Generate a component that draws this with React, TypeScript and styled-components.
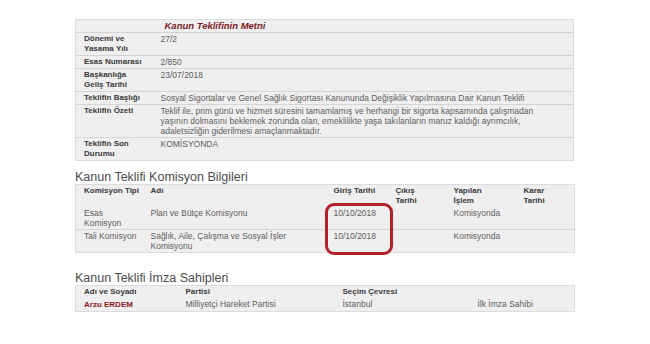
import React from "react";
import styled, { createGlobalStyle } from "styled-components";

const GlobalStyle = createGlobalStyle`
    *, *::before, *::after {
        box-sizing: border-box;
    }
    body {
        margin: 0;
        background: #fff;
        font-family: "Liberation Sans", Arial, sans-serif;
    }
`;

const Page = styled.div`
    width: 650px;
    height: 344px;
    padding: 19px 0 0 75px;
`;

const Content = styled.div`
    width: 499px;
    display: flex;
    flex-direction: column;
`;

const Table = styled.table`
    width: 499px;
    border-collapse: collapse;
    table-layout: fixed;
    background: #efefef;
    border: 1px solid #dcdcdc;
    font-size: 8.5px;
    line-height: 10px;
`;

const Row = styled.tr`
    border-bottom: 1px solid #d4d4d4;
    &:last-child {
        border-bottom: none;
    }
`;

const Cell = styled.td<{ $w?: number; $pr?: number }>`
    width: ${(p) => (p.$w ? `${p.$w}px` : "auto")};
    padding: 1px ${(p) => p.$pr ?? 3}px 1px 8px;
    vertical-align: top;
    color: #5e5e5e;
    text-align: left;
`;

const Label = styled(Cell)`
    font-size: 8px;
    font-weight: bold;
    color: #3a3a3a;
`;

const Head = styled.th<{ $w?: number }>`
    width: ${(p) => (p.$w ? `${p.$w}px` : "auto")};
    padding: 1px 3px 1px 8px;
    vertical-align: top;
    text-align: left;
    white-space: pre-line;
    font-size: 8px;
    font-weight: bold;
    color: #3a3a3a;
`;

const DocTitle = styled.span`
    font-size: 9.5px;
    font-style: italic;
    font-weight: bold;
    color: #7a1c24;
    padding-left: 4px;
`;

const SectionTitle = styled.h2<{ $top: number }>`
    margin: ${(p) => p.$top}px 0 0;
    font-size: 12.5px;
    line-height: 13px;
    font-weight: normal;
    color: #4c4c4c;
`;

const Framed = styled.div`
    position: relative;
`;

const Highlight = styled.div`
    position: absolute;
    left: 250px;
    top: 19px;
    width: 68px;
    height: 52px;
    border: 3px solid #b3202e;
    border-radius: 9px;
`;

const Name = styled.span`
    font-size: 8px;
    font-weight: bold;
    color: #8a1a22;
`;

const details: [string, React.ReactNode][] = [
    ["Dönemi ve Yasama Yılı", "27/2"],
    ["Esas Numarası", "2/850"],
    ["Başkanlığa Geliş Tarihi", "23/07/2018"],
    [
        "Teklifin Başlığı",
        "Sosyal Sigortalar ve Genel Sağlık Sigortası Kanununda Değişiklik Yapılmasına Dair Kanun Teklifi",
    ],
    [
        "Teklifin Özeti",
        "Teklif ile, prim günü ve hizmet süresini tamamlamış ve herhangi bir sigorta kapsamında çalışmadan yaşının dolmasını beklemek zorunda olan, emeklilikte yaşa takılanların maruz kaldığı ayrımcılık, adaletsizliğin giderilmesi amaçlanmaktadır.",
    ],
    ["Teklifin Son Durumu", "KOMİSYONDA"],
];

const komisyonCols = [
    { title: "Komisyon Tipi", w: 67 },
    { title: "Adı", w: 183 },
    { title: "Giriş Tarihi", w: 62 },
    { title: "Çıkış\nTarihi", w: 58 },
    { title: "Yapılan\nİşlem", w: 70 },
    { title: "Karar\nTarihi", w: 59 },
];

const komisyonlar = [
    ["Esas Komisyon", "Plan ve Bütçe Komisyonu", "10/10/2018", "", "Komisyonda", ""],
    ["Tali Komisyon", "Sağlık, Aile, Çalışma ve Sosyal İşler Komisyonu", "10/10/2018", "", "Komisyonda", ""],
];

const imzaCols = [
    { title: "Adı ve Soyadı", w: 102 },
    { title: "Partisi", w: 157 },
    { title: "Seçim Çevresi", w: 135 },
    { title: "", w: 105 },
];

const imzalar = [["Arzu ERDEM", "Milliyetçi Hareket Partisi", "İstanbul", "İlk İmza Sahibi"]];

export default function App() {
    return (
        <>
            <GlobalStyle />
            <Page>
                <Content>
                    <Table>
                        <tbody>
                            <Row>
                                <Cell $w={77}></Cell>
                                <Cell $pr={24}>
                                    <DocTitle>Kanun Teklifinin Metni</DocTitle>
                                </Cell>
                            </Row>
                            {details.map(([k, v]) => (
                                <Row key={k}>
                                    <Label $w={77} $pr={7}>
                                        {k}
                                    </Label>
                                    <Cell $pr={24}>{v}</Cell>
                                </Row>
                            ))}
                        </tbody>
                    </Table>

                    <SectionTitle $top={10}>Kanun Teklifi Komisyon Bilgileri</SectionTitle>
                    <Framed>
                        <Table>
                            <thead>
                                <Row>
                                    {komisyonCols.map((c) => (
                                        <Head key={c.title} $w={c.w}>
                                            {c.title}
                                        </Head>
                                    ))}
                                </Row>
                            </thead>
                            <tbody>
                                {komisyonlar.map((r) => (
                                    <Row key={r[0]}>
                                        {r.map((v, i) => (
                                            <Cell key={i} $w={komisyonCols[i].w}>
                                                {v}
                                            </Cell>
                                        ))}
                                    </Row>
                                ))}
                            </tbody>
                        </Table>
                        <Highlight />
                    </Framed>

                    <SectionTitle $top={19}>Kanun Teklifi İmza Sahipleri</SectionTitle>
                    <Table>
                        <thead>
                            <Row>
                                {imzaCols.map((c, i) => (
                                    <Head key={i} $w={c.w}>
                                        {c.title}
                                    </Head>
                                ))}
                            </Row>
                        </thead>
                        <tbody>
                            {imzalar.map((r) => (
                                <Row key={r[0]}>
                                    {r.map((v, i) => (
                                        <Cell key={i} $w={imzaCols[i].w}>
                                            {i === 0 ? <Name>{v}</Name> : v}
                                        </Cell>
                                    ))}
                                </Row>
                            ))}
                        </tbody>
                    </Table>
                </Content>
            </Page>
        </>
    );
}
